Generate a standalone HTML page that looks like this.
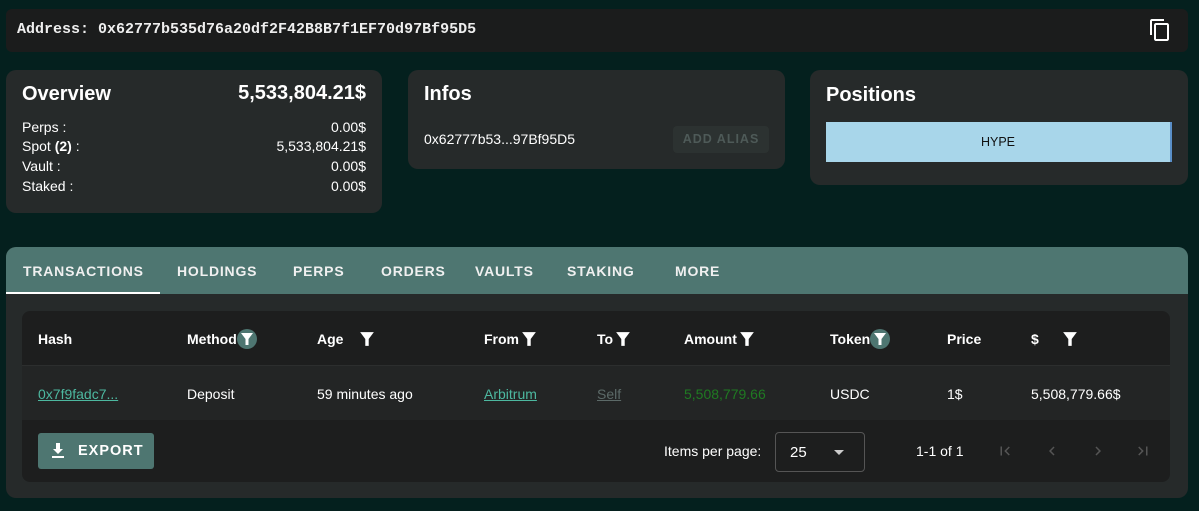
<!DOCTYPE html>
<html><head><style>
*{box-sizing:border-box;margin:0;padding:0}
body{width:1199px;height:511px;background:#04201e;font-family:"Liberation Sans",sans-serif;color:#fff;position:relative;overflow:hidden}
.abs{position:absolute}
.card{position:absolute;background:#262a2a;border-radius:10px}
.addr{left:6px;top:9px;width:1182px;height:43px;background:#1b1c1c;border-radius:6px}
.addr span{position:absolute;left:11px;top:12px;font-family:"Liberation Mono",monospace;font-size:15px;font-weight:bold;color:#eee}
.h{font-size:20px;font-weight:bold;position:absolute}
.row{position:absolute;left:16px;right:16px;font-size:14px;display:flex;justify-content:space-between}
.tabs{left:6px;top:247px;width:1182px;height:251px;background:#262a2a;border-radius:10px;overflow:hidden}
.tabh{position:absolute;left:0;top:0;width:100%;height:47px;background:#4e7671}
.tab{position:absolute;top:16px;font-size:14px;font-weight:bold;letter-spacing:0.8px;color:#f0f0f0}
.tbl{position:absolute;left:16px;top:64px;width:1148px;height:171px;background:#1d1e1e;border-radius:8px}
.c{position:absolute;font-size:14px}
.hd{top:18px;height:20px;font-weight:bold;display:flex;align-items:center}
.dt{top:75px}
.f{margin-left:3px}
.fc{display:inline-flex;align-items:center;justify-content:center;width:20px;height:20px;border-radius:50%;background:#4e7671}
</style></head><body>
<div class="abs addr"><span>Address: 0x62777b535d76a20df2F42B8B7f1EF70d97Bf95D5</span>
<svg class="abs" style="left:1142px;top:9px" width="24" height="24" viewBox="0 0 24 24"><path fill="#fff" d="M16 1H4c-1.1 0-2 .9-2 2v14h2V3h12V1zm3 4H8c-1.1 0-2 .9-2 2v14c0 1.1.9 2 2 2h11c1.1 0 2-.9 2-2V7c0-1.1-.9-2-2-2zm0 16H8V7h11v14z"/></svg></div>

<div class="card" style="left:6px;top:70px;width:376px;height:143px">
<div class="h" style="left:16px;top:13px">Overview</div>
<div class="h" style="right:16px;top:12px">5,533,804.21$</div>
<div class="row" style="top:49px"><span>Perps :</span><span>0.00$</span></div>
<div class="row" style="top:68px"><span>Spot <b>(2)</b> :</span><span>5,533,804.21$</span></div>
<div class="row" style="top:88px"><span>Vault :</span><span>0.00$</span></div>
<div class="row" style="top:108px"><span>Staked :</span><span>0.00$</span></div>
</div>

<div class="card" style="left:408px;top:70px;width:377px;height:99px">
<div class="h" style="left:16px;top:13px">Infos</div>
<div class="c" style="left:16px;top:61px">0x62777b53...97Bf95D5</div>
<div class="abs" style="left:265px;top:56px;width:96px;height:27px;background:#2c3231;border-radius:4px;color:#4e5a58;font-size:12.5px;font-weight:bold;letter-spacing:1px;text-align:center;line-height:27px">ADD ALIAS</div>
</div>

<div class="card" style="left:810px;top:70px;width:378px;height:115px">
<div class="h" style="left:16px;top:14px">Positions</div>
<div class="abs" style="left:16px;top:52px;width:346px;height:40px;background:#a8d6ea;border-right:2px solid #5a8fc8;color:#111;font-size:12.5px;text-align:center;line-height:40px">HYPE</div>
</div>

<div class="abs tabs">
<div class="tabh"></div>
<div class="abs" style="left:0;top:45px;width:154px;height:2px;background:#fff"></div>
<div class="tab" style="left:17px">TRANSACTIONS</div>
<div class="tab" style="left:171px">HOLDINGS</div>
<div class="tab" style="left:287px">PERPS</div>
<div class="tab" style="left:375px">ORDERS</div>
<div class="tab" style="left:469px">VAULTS</div>
<div class="tab" style="left:561px">STAKING</div>
<div class="tab" style="left:669px">MORE</div>
<div class="tbl">
<div class="abs" style="left:0;top:54px;width:100%;height:55px;background:#232525;border-top:1px solid #2c2e2e"></div>
<div class="c hd" style="left:16px">Hash</div>
<div class="c hd" style="left:165px">Method<span class="fc"><svg width="12" height="14" viewBox="0 0 12 14"><path fill="#fff" d="M0 1h12L7.5 7v6h-3V7z"/></svg></span></div>
<div class="c hd" style="left:295px">Age<svg class="f" style="margin-left:17px" width="14" height="16" viewBox="0 0 12 14"><path fill="#fff" d="M0 1h12L7.5 7v6h-3V7z"/></svg></div>
<div class="c hd" style="left:462px">From<svg class="f" width="14" height="16" viewBox="0 0 12 14"><path fill="#fff" d="M0 1h12L7.5 7v6h-3V7z"/></svg></div>
<div class="c hd" style="left:575px">To<svg class="f" width="14" height="16" viewBox="0 0 12 14"><path fill="#fff" d="M0 1h12L7.5 7v6h-3V7z"/></svg></div>
<div class="c hd" style="left:662px">Amount<svg class="f" width="14" height="16" viewBox="0 0 12 14"><path fill="#fff" d="M0 1h12L7.5 7v6h-3V7z"/></svg></div>
<div class="c hd" style="left:808px">Token<span class="fc"><svg width="12" height="14" viewBox="0 0 12 14"><path fill="#fff" d="M0 1h12L7.5 7v6h-3V7z"/></svg></span></div>
<div class="c hd" style="left:925px">Price</div>
<div class="c hd" style="left:1009px">$<svg class="f" style="margin-left:24px" width="14" height="16" viewBox="0 0 12 14"><path fill="#fff" d="M0 1h12L7.5 7v6h-3V7z"/></svg></div>
<div class="c dt" style="left:16px;color:#4db8a0;text-decoration:underline">0x7f9fadc7...</div>
<div class="c dt" style="left:165px">Deposit</div>
<div class="c dt" style="left:295px">59 minutes ago</div>
<div class="c dt" style="left:462px;color:#4db8a0;text-decoration:underline">Arbitrum</div>
<div class="c dt" style="left:575px;color:#5c6a68;text-decoration:underline">Self</div>
<div class="c dt" style="left:662px;color:#1f7a22">5,508,779.66</div>
<div class="c dt" style="left:808px">USDC</div>
<div class="c dt" style="left:925px">1$</div>
<div class="c dt" style="left:1009px">5,508,779.66$</div>
<div class="abs" style="left:16px;top:122px;width:116px;height:36px;background:#4e7671;border-radius:3px;font-size:14.5px;font-weight:bold;letter-spacing:1px;line-height:36px;padding-left:40px">EXPORT
<svg class="abs" style="left:13px;top:10px" width="14" height="16" viewBox="0 0 14 16"><path fill="#fff" d="M5 0h4v6h3l-5 5-5-5h3zM1 13h12v2H1z"/></svg></div>
<div class="c" style="left:642px;top:132px;font-size:14px">Items per page:</div>
<div class="abs" style="left:753px;top:121px;width:90px;height:40px;border:1px solid #555;border-radius:4px"><span class="abs" style="left:14px;top:11px;font-size:15px">25</span><span class="abs" style="left:58px;top:17px;width:0;height:0;border-left:5px solid transparent;border-right:5px solid transparent;border-top:5px solid #ccc"></span></div>
<div class="c" style="left:894px;top:132px">1-1 of 1</div>
<svg class="abs" style="left:974px;top:131px" width="18" height="18" viewBox="0 0 24 24"><path fill="#555" d="M18.4 16.6L13.8 12l4.6-4.6L17 6l-6 6 6 6zM6 6h2v12H6z"/></svg>
<svg class="abs" style="left:1021px;top:131px" width="18" height="18" viewBox="0 0 24 24"><path fill="#555" d="M15.4 7.4L14 6l-6 6 6 6 1.4-1.4L10.8 12z"/></svg>
<svg class="abs" style="left:1067px;top:131px" width="18" height="18" viewBox="0 0 24 24"><path fill="#555" d="M10 6L8.6 7.4 13.2 12l-4.6 4.6L10 18l6-6z"/></svg>
<svg class="abs" style="left:1112px;top:131px" width="18" height="18" viewBox="0 0 24 24"><path fill="#555" d="M5.6 7.4L10.2 12l-4.6 4.6L7 18l6-6-6-6zM16 6h2v12h-2z"/></svg>
</div>
</div>
</body></html>
